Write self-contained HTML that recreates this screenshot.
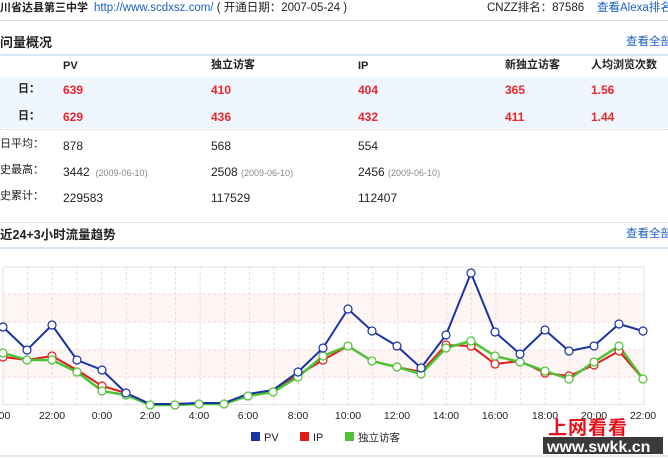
<!DOCTYPE html>
<html><head><meta charset="utf-8"><style>
body{margin:0;width:668px;height:459px;overflow:hidden;background:#fff;font-family:"Liberation Sans","Noto Sans CJK SC",sans-serif;position:relative;color:#222}
.a{position:absolute;white-space:nowrap;line-height:1}
.b{font-weight:bold}
.r{color:#e8262b;font-weight:bold;font-size:12px}
.n{font-size:12px;color:#222}
.l{font-size:11px}
.s{font-size:9px;color:#888}
.blue{color:#1a5fc4}
</style></head><body>
<div class="a b" style="left:0;top:3px;font-size:11px">川省达县第三中学</div>
<div class="a" style="left:94px;top:3px;font-size:11.5px"><span class="blue">http://www.scdxsz.com/</span> ( 开通日期：2007-05-24 )</div>
<div class="a" style="left:487px;top:3px;font-size:11.5px">CNZZ排名：87586</div>
<div class="a blue" style="left:597px;top:3px;font-size:11.5px">查看Alexa排名</div>
<div style="position:absolute;left:0;top:20px;width:668px;height:1px;background:#d5dfe9"></div>

<div class="a b" style="left:0;top:36px;font-size:13px">问量概况</div>
<div class="a blue" style="left:626px;top:37px;font-size:11.5px">查看全部</div>
<div style="position:absolute;left:0;top:54px;width:668px;height:2px;background:#d8e6f4"></div>

<div class="a b l" style="left:63px;top:61px">PV</div>
<div class="a b l" style="left:211px;top:60px">独立访客</div>
<div class="a b l" style="left:358px;top:61px">IP</div>
<div class="a b l" style="left:505px;top:60px">新独立访客</div>
<div class="a b l" style="left:591px;top:60px">人均浏览次数</div>

<div style="position:absolute;left:0;top:77px;width:668px;height:51px;background:#f0f6fd"></div>
<div class="a b l" style="left:18px;top:84px">日：</div>
<div class="a r" style="left:63px;top:84px">639</div><div class="a r" style="left:211px;top:84px">410</div><div class="a r" style="left:358px;top:84px">404</div><div class="a r" style="left:505px;top:84px">365</div><div class="a r" style="left:591px;top:84px">1.56</div>
<div class="a b l" style="left:18px;top:111px">日：</div>
<div class="a r" style="left:63px;top:111px">629</div><div class="a r" style="left:211px;top:111px">436</div><div class="a r" style="left:358px;top:111px">432</div><div class="a r" style="left:505px;top:111px">411</div><div class="a r" style="left:591px;top:111px">1.44</div>
<div style="position:absolute;left:0;top:129px;width:668px;border-top:1px dotted #c8d4e0"></div>

<div class="a l" style="left:0;top:139px">日平均：</div>
<div class="a n" style="left:63px;top:140px">878</div><div class="a n" style="left:211px;top:140px">568</div><div class="a n" style="left:358px;top:140px">554</div>
<div class="a l" style="left:0;top:165px">史最高：</div>
<div class="a n" style="left:63px;top:166px">3442 <span class="s">&nbsp;(2009-06-10)</span></div><div class="a n" style="left:211px;top:166px">2508 <span class="s">(2009-06-10)</span></div><div class="a n" style="left:358px;top:166px">2456 <span class="s">(2009-06-10)</span></div>
<div class="a l" style="left:0;top:191px">史累计：</div>
<div class="a n" style="left:63px;top:192px">229583</div><div class="a n" style="left:211px;top:192px">117529</div><div class="a n" style="left:358px;top:192px">112407</div>

<div style="position:absolute;left:0;top:222px;width:668px;height:1px;background:#dde6ef"></div>
<div class="a b" style="left:0;top:229px;font-size:12.5px">近24+3小时流量趋势</div>
<div class="a blue" style="left:626px;top:229px;font-size:11.5px">查看全部</div>
<div style="position:absolute;left:0;top:247px;width:668px;height:2px;background:#d8e6f4"></div>

<svg style="position:absolute;left:0;top:0" width="668" height="459" viewBox="0 0 668 459">
<g fill="#fcf1ef" opacity=".6">
<rect x="3" y="294" width="641" height="28"/>
<rect x="3" y="350" width="641" height="27"/>
</g>
<g stroke="#f7d6d3" stroke-width="1" stroke-dasharray="3,2" fill="none">
<path d="M3 294H644M3 322H644M3 350H644M3 377H644"/>
<path d="M27.6 267V404M52.3 267V404M77 267V404M101.6 267V404M126.3 267V404M150.9 267V404M175.5 267V404M200.2 267V404M224.8 267V404M249.5 267V404M274.1 267V404M298.8 267V404M323.4 267V404M348 267V404M372.7 267V404M397.4 267V404M422 267V404M446.6 267V404M471.3 267V404M495.9 267V404M520.6 267V404M545.2 267V404M569.9 267V404M594.5 267V404M619.2 267V404"/>
</g>
<rect x="3" y="267" width="641" height="137.5" fill="none" stroke="#e2e2e2"/>
<polyline fill="none" stroke="#e21b1b" stroke-width="2" points="3,357 27,360 52,356 77,370 102,386 126,393 150,404 175,404 199,403 224,403 248,395 273,391 298,375 323,360 348,346 372,361 397,367 421,372 446,345 471,346 495,364 520,361 545,373 569,376 594,365 619,351 643,379"/>
<polyline fill="none" stroke="#4cc234" stroke-width="2.5" points="3,353 27,360 52,360 77,372 102,391 126,395 150,405 175,405 199,404 224,404 248,396 273,392 298,377 323,356 348,346 372,361 397,367 421,374 446,348 471,341 495,356 520,362 545,371 569,379 594,362 619,346 643,379"/>
<polyline fill="none" stroke="#1633a8" stroke-width="2" points="3,327 27,350 52,325 77,360 102,370 126,393 150,404 175,404 199,403 224,403 248,394 273,390 298,372 323,348 348,309 372,331 397,346 421,368 446,335 471,273 495,332 520,354 545,330 569,351 594,346 619,324 643,331"/>
<g fill="#fff" stroke="#e21b1b" stroke-width="1.2">
<circle cx="3" cy="357" r="4"/><circle cx="52" cy="356" r="4"/><circle cx="102" cy="386" r="4"/><circle cx="323" cy="360" r="4"/><circle cx="446" cy="345" r="4"/><circle cx="471" cy="346" r="4"/><circle cx="495" cy="364" r="4"/><circle cx="545" cy="373" r="4"/><circle cx="569" cy="376" r="4"/><circle cx="594" cy="365" r="4"/><circle cx="619" cy="351" r="4"/>
</g>
<g fill="#fff" stroke="#4cc234" stroke-width="1.2">
<circle cx="3" cy="353" r="4"/><circle cx="27" cy="360" r="4"/><circle cx="52" cy="360" r="4"/><circle cx="77" cy="372" r="4"/><circle cx="102" cy="391" r="4"/><circle cx="126" cy="395" r="4"/><circle cx="150" cy="405" r="4"/><circle cx="175" cy="405" r="4"/><circle cx="199" cy="404" r="4"/><circle cx="224" cy="404" r="4"/><circle cx="248" cy="396" r="4"/><circle cx="273" cy="392" r="4"/><circle cx="298" cy="377" r="4"/><circle cx="323" cy="356" r="4"/><circle cx="348" cy="346" r="4"/><circle cx="372" cy="361" r="4"/><circle cx="397" cy="367" r="4"/><circle cx="421" cy="374" r="4"/><circle cx="446" cy="348" r="4"/><circle cx="471" cy="341" r="4"/><circle cx="495" cy="356" r="4"/><circle cx="520" cy="362" r="4"/><circle cx="545" cy="371" r="4"/><circle cx="569" cy="379" r="4"/><circle cx="594" cy="362" r="4"/><circle cx="619" cy="346" r="4"/><circle cx="643" cy="379" r="4"/>
</g>
<g fill="#fff" stroke="#1633a8" stroke-width="1.2">
<circle cx="3" cy="327" r="4"/><circle cx="27" cy="350" r="4"/><circle cx="52" cy="325" r="4"/><circle cx="77" cy="360" r="4"/><circle cx="102" cy="370" r="4"/><circle cx="126" cy="393" r="4"/><circle cx="298" cy="372" r="4"/><circle cx="323" cy="348" r="4"/><circle cx="348" cy="309" r="4"/><circle cx="372" cy="331" r="4"/><circle cx="397" cy="346" r="4"/><circle cx="421" cy="368" r="4"/><circle cx="446" cy="335" r="4"/><circle cx="471" cy="273" r="4"/><circle cx="495" cy="332" r="4"/><circle cx="520" cy="354" r="4"/><circle cx="545" cy="330" r="4"/><circle cx="569" cy="351" r="4"/><circle cx="594" cy="346" r="4"/><circle cx="619" cy="324" r="4"/><circle cx="643" cy="331" r="4"/>
</g>
<g font-family="Liberation Sans, sans-serif" font-size="10.5" fill="#222" text-anchor="middle">
<text x="3" y="419">:00</text><text x="52" y="419">22:00</text><text x="102" y="419">0:00</text><text x="150" y="419">2:00</text><text x="199" y="419">4:00</text><text x="248" y="419">6:00</text><text x="298" y="419">8:00</text><text x="348" y="419">10:00</text><text x="397" y="419">12:00</text><text x="446" y="419">14:00</text><text x="495" y="419">16:00</text><text x="545" y="419">18:00</text><text x="594" y="419">20:00</text><text x="643" y="419">22:00</text>
</g>
<rect x="251" y="432" width="9" height="9" fill="#1633a8"/><text x="264" y="441" font-size="11" font-family="Liberation Sans, sans-serif" fill="#222">PV</text>
<rect x="300" y="432" width="9" height="9" fill="#e21b1b"/><text x="313" y="441" font-size="11" font-family="Liberation Sans, sans-serif" fill="#222">IP</text>
<rect x="345" y="432" width="9" height="9" fill="#4cc234"/><text x="358" y="441" font-size="10.5" font-family="Liberation Sans, Noto Sans CJK SC, sans-serif" fill="#222">独立访客</text>
<rect x="0" y="455" width="668" height="2" fill="#e3ebf3"/>
<text x="548" y="434" font-size="19" font-weight="bold" font-family="Noto Sans CJK SC, sans-serif" fill="#e8101a" letter-spacing="1">上网看看</text>
<rect x="543" y="437" width="120" height="17" fill="#3a3a3a"/>
<text x="547" y="452" font-size="16" font-weight="bold" font-family="Liberation Sans, sans-serif" fill="#fff">www.swkk.cn</text>
</svg>
</body></html>
